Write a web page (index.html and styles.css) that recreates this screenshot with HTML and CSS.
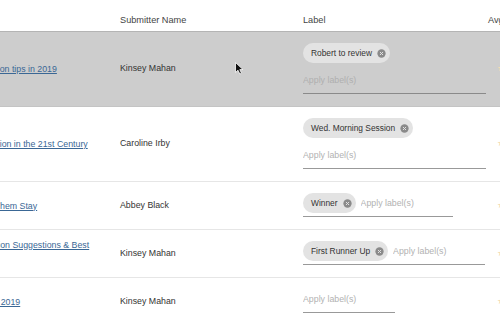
FILE: index.html
```html
<!DOCTYPE html>
<html lang="en">
<head>
    <meta charset="UTF-8">
    <meta name="viewport" content="width=device-width, initial-scale=1.0">
    <title>Submissions</title>
    <link rel="stylesheet" href="styles.css">
</head>
<body>
    <!-- submissions table, scrolled sideways -->
    <div class="table-scroll">
        <table class="subs-table">
            <colgroup>
                <col class="col-title">
                <col class="col-name">
                <col class="col-label">
                <col class="col-avg">
            </colgroup>
            <thead>
                <tr>
                    <th>Title</th>
                    <th>Submitter Name</th>
                    <th>Label</th>
                    <th>Avg. Rating</th>
                </tr>
            </thead>
            <tbody>
                <tr class="row-hover">
                    <td class="title-cell"><a href="#">Top 5 Negotiation tips in 2019</a></td>
                    <td>Kinsey Mahan</td>
                    <td>
                        <div class="label-box stacked">
                            <span class="chip">Robert to review <svg class="chip-x" viewBox="0 0 10 10"><circle cx="5" cy="5" r="4.6"/><path d="M3.3 3.3 6.7 6.7M6.7 3.3 3.3 6.7"/></svg></span>
                            <input class="label-input" type="text" placeholder="Apply label(s)">
                        </div>
                    </td>
                    <td><span class="stars">★★★★☆</span></td>
                </tr>
                <tr>
                    <td class="title-cell"><a href="#">Design Innovation in the 21st Century</a></td>
                    <td>Caroline Irby</td>
                    <td>
                        <div class="label-box stacked">
                            <span class="chip">Wed. Morning Session <svg class="chip-x" viewBox="0 0 10 10"><circle cx="5" cy="5" r="4.6"/><path d="M3.3 3.3 6.7 6.7M6.7 3.3 3.3 6.7"/></svg></span>
                            <input class="label-input" type="text" placeholder="Apply label(s)">
                        </div>
                    </td>
                    <td><span class="stars">★★★☆☆</span></td>
                </tr>
                <tr>
                    <td class="title-cell"><a href="#">How to Make Them Stay</a></td>
                    <td>Abbey Black</td>
                    <td>
                        <div class="label-box">
                            <span class="chip">Winner <svg class="chip-x" viewBox="0 0 10 10"><circle cx="5" cy="5" r="4.6"/><path d="M3.3 3.3 6.7 6.7M6.7 3.3 3.3 6.7"/></svg></span>
                            <input class="label-input" type="text" placeholder="Apply label(s)">
                        </div>
                    </td>
                    <td><span class="stars">★★★★★</span></td>
                </tr>
                <tr>
                    <td class="title-cell"><a href="#">Panel Moderation Suggestions &amp; Best Practices</a></td>
                    <td>Kinsey Mahan</td>
                    <td>
                        <div class="label-box">
                            <span class="chip">First Runner Up <svg class="chip-x" viewBox="0 0 10 10"><circle cx="5" cy="5" r="4.6"/><path d="M3.3 3.3 6.7 6.7M6.7 3.3 3.3 6.7"/></svg></span>
                            <input class="label-input" type="text" placeholder="Apply label(s)">
                        </div>
                    </td>
                    <td><span class="stars">★★★★☆</span></td>
                </tr>
                <tr>
                    <td class="title-cell"><a href="#">Tech Trends in 2019</a></td>
                    <td>Kinsey Mahan</td>
                    <td>
                        <div class="label-box">
                            <input class="label-input" type="text" placeholder="Apply label(s)">
                        </div>
                    </td>
                    <td><span class="stars">★★★☆☆</span></td>
                </tr>
            </tbody>
        </table>
    </div>

    <!-- mouse pointer -->
    <svg class="cursor" viewBox="0 0 9 13"><path d="M0.5 0.5V10.5L3 8.2 4.8 12 6.5 11.2 4.8 7.6H8Z"/></svg>
</body>
</html>
```
FILE: styles.css
```css
/* base */
body {
    margin: 0;
    position: relative;
    font-family: "Liberation Sans", Arial, sans-serif;
    color: #333;
    background: #fff;
}

/* table scrolled to the left */
.table-scroll {
    width: 500px;
    height: 318px;
    overflow: hidden;
}
.subs-table {
    margin-left: -59px;
    width: 607px;
    table-layout: fixed;
    border-collapse: collapse;
    font-size: 8.8px;
}
.col-title { width: 179px; }
.col-name { width: 183px; }
.col-label { width: 185px; }
.col-avg { width: 60px; }

.subs-table th {
    text-align: left;
    font-weight: normal;
    font-size: 9.2px;
    line-height: 11px;
    color: #444;
    padding: 15px 0 5px 0;
    white-space: nowrap;
    border-bottom: 1px solid #b4b4b4;
}
.subs-table td {
    padding: 11px 0 12px 0;
    vertical-align: middle;
    line-height: 11px;
    border-bottom: 1px solid #e6e6e6;
}
.subs-table td.title-cell {
    padding: 5px 12px 5px 0;
}
.subs-table td a {
    color: #3a6795;
    text-decoration: underline;
    line-height: 18px;
}
.row-hover td {
    background-color: #cdcdcd;
    border-bottom-color: #c4c4c4;
}

/* label picker */
.label-box {
    display: inline-flex;
    flex-wrap: wrap;
    align-items: center;
    column-gap: 5px;
    row-gap: 7px;
    max-width: 185px;
    padding-bottom: 3px;
    border-bottom: 1px solid #999;
}
.label-box.stacked {
    width: 183px;
}
.label-box.stacked .label-input {
    flex-basis: 100%;
}
.row-hover .label-box {
    border-bottom-color: #8a8a8a;
}
.chip {
    display: inline-flex;
    align-items: center;
    gap: 5px;
    height: 20px;
    padding: 0 4px 0 8px;
    border-radius: 10px;
    background-color: #e3e3e3;
    font-size: 8.4px;
    color: #333;
    white-space: nowrap;
}
.chip-x {
    width: 9px;
    height: 9px;
}
.chip-x circle {
    fill: #8a8a8a;
}
.chip-x path {
    stroke: #e3e3e3;
    stroke-width: 1.1;
}
.label-input {
    width: 92px;
    height: 20px;
    padding: 0;
    border: none;
    outline: none;
    background: transparent;
    font-family: inherit;
    font-size: 8.8px;
    color: #333;
}
.label-input::placeholder {
    color: #b2b2b2;
}
.row-hover .label-input::placeholder {
    color: #afafaf;
}

/* rating column, mostly scrolled off */
.stars {
    display: inline-block;
    padding-left: 9px;
    color: #f3dcb8;
    white-space: nowrap;
}

.cursor {
    position: absolute;
    left: 235px;
    top: 62px;
    width: 9px;
    height: 13px;
}
.cursor path {
    fill: #111;
    stroke: #fff;
    stroke-width: 0.8;
}
```
